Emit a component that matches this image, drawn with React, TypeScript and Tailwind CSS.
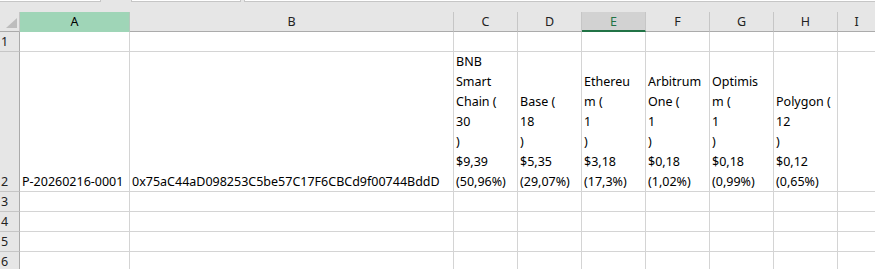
import React from 'react'

const cols = [
	{ key: 'A', w: 'w-[110px]' },
	{ key: 'B', w: 'w-[324px]' },
	{ key: 'C', w: 'w-[64px]' },
	{ key: 'D', w: 'w-[64px]' },
	{ key: 'E', w: 'w-[64px]' },
	{ key: 'F', w: 'w-[64px]' },
	{ key: 'G', w: 'w-[64px]' },
	{ key: 'H', w: 'w-[64px]' },
]

const row2: string[][] = [
	['P-20260216-0001'],
	['0x75aC44aD098253C5be57C17F6CBCd9f00744BddD'],
	['BNB', 'Smart', 'Chain (', '30', ')', '$9,39', '(50,96%)'],
	['Base (', '18', ')', '$5,35', '(29,07%)'],
	['Ethereu', 'm (', '1', ')', '$3,18', '(17,3%)'],
	['Arbitrum', 'One (', '1', ')', '$0,18', '(1,02%)'],
	['Optimis', 'm (', '1', ')', '$0,18', '(0,99%)'],
	['Polygon (', '12', ')', '$0,12', '(0,65%)'],
]

function ColHeader({ label, w }: { label: string; w: string }) {
	if (label === 'A') {
		return (
			<div className={`${w} h-full shrink-0 bg-[#9fd5b7] border-r border-[#b4c9bc] text-center leading-[19px]`}>
				{label}
			</div>
		)
	}
	if (label === 'E') {
		return (
			<div className={`${w} h-full shrink-0 bg-[#d2d2d2] border-r border-b-2 border-r-[#c6c6c6] border-b-[#217346] text-center leading-[19px] text-[#217346]`}>
				{label}
			</div>
		)
	}
	return (
		<div className={`${w} h-full shrink-0 border-r border-b border-r-[#c6c6c6] border-b-[#ababab] text-center leading-[19px] text-[#222]`}>
			{label}
		</div>
	)
}

function EmptyRow({ n }: { n: number }) {
	return (
		<div className="flex h-5">
			<div className="w-[20px] shrink-0 bg-[#e6e6e6] border-r border-b border-r-[#ababab] border-b-[#c6c6c6] pl-[1px] leading-[19px] text-[#222]">
				{n}
			</div>
			{cols.map(c => (
				<div key={c.key} className={`${c.w} shrink-0 border-r border-b border-[#d4d4d4]`} />
			))}
			<div className="flex-1 border-b border-[#d4d4d4]" />
		</div>
	)
}

export default function App() {
	return (
		<div className="w-[875px] h-[269px] overflow-hidden bg-[#e6e6e6] font-['Noto_Sans',sans-serif] text-[12.5px] text-black">
			{/* bottom edge of the formula bar */}
			<div className="h-3">
				<div className="flex h-[2px]">
					<div className="w-[101px] bg-white border-r border-b border-[#c6c6c6]" />
					<div className="w-[30px]" />
					<div className="w-[110px] bg-white border-x border-b border-[#c6c6c6]" />
					<div className="w-[3px]" />
					<div className="flex-1 bg-white border-l border-b border-[#c6c6c6]" />
				</div>
			</div>

			{/* column headers */}
			<div className="flex h-5">
				<div className="w-[20px] shrink-0 border-r border-b border-r-[#c6c6c6] border-b-[#ababab]">
					<svg width="19" height="19" viewBox="0 0 19 19">
						<polygon points="17,6 17,16 6,16" fill="#bdbdbd" />
					</svg>
				</div>
				{cols.map(c => (
					<ColHeader key={c.key} label={c.key} w={c.w} />
				))}
				<div className="flex-1 border-b border-[#ababab] text-center leading-[19px] text-[#222]">I</div>
			</div>

			<div className="bg-white">
				<EmptyRow n={1} />

				<div className="flex h-[140px]">
					<div className="w-[20px] shrink-0 bg-[#e6e6e6] border-r border-b border-r-[#ababab] border-b-[#c6c6c6] pl-[1px] flex flex-col justify-end text-[#222]">
						<div className="-mb-px leading-5">2</div>
					</div>
					{cols.map((c, i) => (
						<div key={c.key} className={`${c.w} shrink-0 border-r border-b border-[#d4d4d4] pl-[2px] flex flex-col justify-end whitespace-nowrap`}>
							<div className="-mb-px">
								{row2[i].map((line, j) => (
									<div key={j} className="leading-5">{line}</div>
								))}
							</div>
						</div>
					))}
					<div className="flex-1 border-b border-[#d4d4d4]" />
				</div>

				<EmptyRow n={3} />
				<EmptyRow n={4} />
				<EmptyRow n={5} />
				<EmptyRow n={6} />
			</div>
		</div>
	)
}
